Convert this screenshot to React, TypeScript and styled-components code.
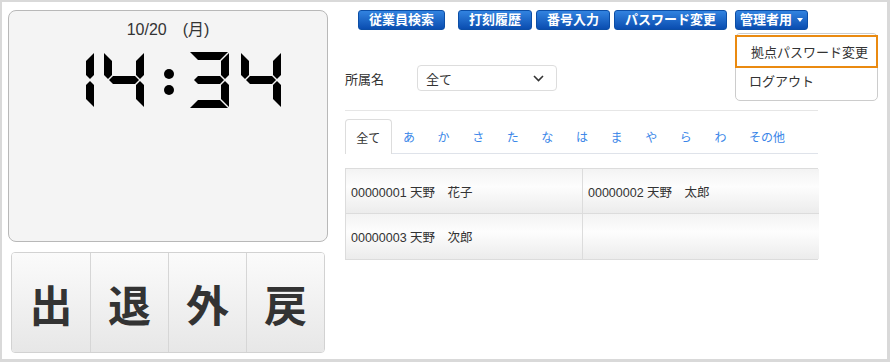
import styled, { createGlobalStyle } from "styled-components";

const GlobalStyle = createGlobalStyle`
  html, body {
    margin: 0;
    padding: 0;
    background: #ffffff;
  }
  body {
    font-family: "Liberation Sans", "Noto Sans CJK JP", sans-serif;
    color: #333333;
  }
`;

const Frame = styled.div`
  box-sizing: border-box;
  width: 890px;
  height: 362px;
  border-style: solid;
  border-color: #d9d9d9;
  border-width: 2px 3px 3px 2px;
  padding: 8px 0 0 6px;
  display: flex;
  gap: 17px;
  position: relative;
  overflow: hidden;
`;

const LeftColumn = styled.div`
  width: 320px;
  display: flex;
  flex-direction: column;
  gap: 10px;
`;

const ClockPanel = styled.div`
  box-sizing: border-box;
  height: 232px;
  border: 1px solid #b8b8b8;
  border-radius: 8px;
  background: #f4f4f4;
  padding-top: 9px;
  display: flex;
  flex-direction: column;
  align-items: center;
`;

const DateText = styled.div`
  font-size: 16px;
  line-height: 20px;
  color: #333;
`;

const DigitSvg = styled.svg`
  margin-top: 12px;
  display: block;
`;

const PunchGroup = styled.div`
  margin: 0 3px;
  display: grid;
  grid-template-columns: repeat(4, 1fr);
  border: 1px solid #d2d2d2;
  border-radius: 4px;
  overflow: hidden;
  height: 101px;
  box-sizing: border-box;
`;

const PunchButton = styled.button`
  border: none;
  border-left: 1px solid #d6d6d6;
  &:first-child {
    border-left: none;
  }
  background: linear-gradient(#fbfbfb, #e7e7e7);
  font-family: "Noto Sans CJK JP", sans-serif;
  font-weight: 700;
  font-size: 43px;
  color: #333;
  padding: 0;
  cursor: pointer;
`;

const RightColumn = styled.div`
  width: 473px;
  display: flex;
  flex-direction: column;
`;

const Nav = styled.div`
  display: flex;
  padding-left: 13px;
  height: 20px;
`;

const NavGroup = styled.div<{ $gapBefore?: number }>`
  display: flex;
  gap: 4px;
  position: relative;
  margin-left: ${(p) => p.$gapBefore ?? 0}px;
`;

const NavButton = styled.button<{ $menu?: boolean }>`
  box-sizing: border-box;
  height: 20px;
  padding: ${(p) => (p.$menu ? "0 4px" : "0 10px")};
  border: 1px solid #0c4ea6;
  border-radius: 3px;
  background: linear-gradient(#3283e0, #0a4db0);
  color: #ffffff;
  font-family: "Liberation Sans", "Noto Sans CJK JP", sans-serif;
  font-size: 13px;
  font-weight: 700;
  line-height: 18px;
  white-space: nowrap;
  display: flex;
  align-items: center;
  gap: 5px;
`;

const Caret = styled.span`
  width: 0;
  height: 0;
  border-left: 3px solid transparent;
  border-right: 3px solid transparent;
  border-top: 4px solid #ffffff;
`;

const Dropdown = styled.div`
  position: absolute;
  top: 23px;
  left: 0;
  width: 143px;
  box-sizing: border-box;
  background: #ffffff;
  border: 1px solid #cccccc;
  border-radius: 5px;
  padding: 1px 0 8px;
  z-index: 5;
`;

const MenuItem = styled.div<{ $highlight?: boolean }>`
  box-sizing: border-box;
  height: ${(p) => (p.$highlight ? "33px" : "24px")};
  margin: ${(p) => (p.$highlight ? "0 -1px" : "0")};
  padding-left: ${(p) => (p.$highlight ? "14px" : "13px")};
  border: ${(p) => (p.$highlight ? "2px solid #ea8a10" : "none")};
  display: flex;
  align-items: center;
  font-size: 13px;
  color: #333;
  white-space: nowrap;
`;

const FilterRow = styled.div`
  margin-top: 35px;
  display: flex;
  align-items: center;
  height: 26px;
`;

const Label = styled.div`
  width: 72px;
  font-size: 13px;
  color: #333;
`;

const SelectBox = styled.div`
  box-sizing: border-box;
  width: 140px;
  height: 26px;
  border: 1px solid #dddddd;
  border-radius: 4px;
  padding: 0 12px 0 8px;
  display: flex;
  align-items: center;
  justify-content: space-between;
  font-size: 13px;
  color: #333;
`;

const Divider = styled.div`
  margin-top: 19px;
  height: 1px;
  background: #e6e6e6;
`;

const TabBar = styled.div`
  margin-top: 8px;
  display: flex;
  height: 35px;
  box-sizing: border-box;
  border-bottom: 1px solid #dfe3ea;
`;

const Tab = styled.div<{ $active?: boolean }>`
  box-sizing: border-box;
  padding: 0 10.3px;
  height: ${(p) => (p.$active ? "35px" : "34px")};
  display: flex;
  align-items: center;
  font-size: 12px;
  color: ${(p) => (p.$active ? "#333" : "#3a86e8")};
  background: #ffffff;
  border: ${(p) => (p.$active ? "1px solid #dddddd" : "1px solid transparent")};
  border-bottom: none;
  border-radius: 4px 4px 0 0;
  white-space: nowrap;
`;

const Table = styled.div`
  margin-top: 14px;
  display: grid;
  grid-template-columns: 237px 236px;
  border: 1px solid #dcdcdc;
  box-sizing: border-box;
`;

const Cell = styled.div`
  box-sizing: border-box;
  height: 45px;
  padding-left: 5px;
  display: flex;
  align-items: center;
  font-size: 12.5px;
  color: #333;
  background: linear-gradient(#f3f3f3, #fdfdfd 40%, #ececec);
  border-right: 1px solid #dcdcdc;
  border-bottom: 1px solid #dcdcdc;
  &:nth-child(2n) {
    border-right: none;
  }
  &:nth-last-child(-n + 2) {
    border-bottom: none;
  }
`;

type Pt = [number, number];

const W = 40;
const H = 56;
const T = 8;
const G = 1;
const M = H / 2;

const SEGMENTS: Record<string, Pt[]> = {
  a: [[G, 0], [W - G, 0], [W - G - T, T], [G + T, T]],
  b: [[W, G], [W, M - G - T / 2], [W - T / 2, M - G], [W - T, M - G - T / 2], [W - T, T + G]],
  c: [[W - T / 2, M + G], [W, M + G + T / 2], [W, H - G], [W - T, H - T - G], [W - T, M + G + T / 2]],
  d: [[G + T, H - T], [W - G - T, H - T], [W - G, H], [G, H]],
  e: [[T / 2, M + G], [T, M + G + T / 2], [T, H - T - G], [0, H - G], [0, M + G + T / 2]],
  f: [[0, G], [T, T + G], [T, M - G - T / 2], [T / 2, M - G], [0, M - G - T / 2]],
  g: [[T / 2 + G, M], [T + G, M - T / 2], [W - T - G, M - T / 2], [W - T / 2 - G, M], [W - T - G, M + T / 2], [T + G, M + T / 2]],
};

const DIGITS: Record<string, string> = {
  "0": "abcdef",
  "1": "bc",
  "2": "abdeg",
  "3": "abcdg",
  "4": "bcfg",
  "5": "acdfg",
  "6": "acdefg",
  "7": "abc",
  "8": "abcdefg",
  "9": "abcdfg",
};

const Digit = ({ value, x }: { value: string; x: number }) => (
  <g transform={`translate(${x} 0)`}>
    {DIGITS[value].split("").map((s) => (
      <polygon key={s} points={SEGMENTS[s].map((p) => p.join(",")).join(" ")} fill="#000" />
    ))}
  </g>
);

const SegmentClock = ({ time }: { time: string }) => {
  const [hh, mm] = time.split(":");
  return (
    <DigitSvg width="230" height="57" viewBox="0 0 230 57">
      <Digit value={hh[0]} x={1} />
      <Digit value={hh[1]} x={51} />
      <circle cx="116" cy="22" r="5" fill="#000" />
      <circle cx="116" cy="38" r="5" fill="#000" />
      <Digit value={mm[0]} x={136} />
      <Digit value={mm[1]} x={188} />
    </DigitSvg>
  );
};

const Chevron = () => (
  <svg width="11" height="7" viewBox="0 0 11 7">
    <path d="M1 1l4.5 4.5L10 1" fill="none" stroke="#333" strokeWidth="1.6" />
  </svg>
);

const tabs = ["あ", "か", "さ", "た", "な", "は", "ま", "や", "ら", "わ", "その他"];

const staff = ["00000001 天野　花子", "00000002 天野　太郎", "00000003 天野　次郎", ""];

const App = () => {
  return (
    <>
      <GlobalStyle />
      <Frame>
        <LeftColumn>
          <ClockPanel>
            <DateText>10/20　(月)</DateText>
            <SegmentClock time="14:34" />
          </ClockPanel>
          <PunchGroup>
            <PunchButton>出</PunchButton>
            <PunchButton>退</PunchButton>
            <PunchButton>外</PunchButton>
            <PunchButton>戻</PunchButton>
          </PunchGroup>
        </LeftColumn>

        <RightColumn>
          <Nav>
            <NavGroup>
              <NavButton>従業員検索</NavButton>
            </NavGroup>
            <NavGroup $gapBefore={13}>
              <NavButton>打刻履歴</NavButton>
              <NavButton>番号入力</NavButton>
              <NavButton>パスワード変更</NavButton>
            </NavGroup>
            <NavGroup $gapBefore={8}>
              <NavButton $menu>
                管理者用
                <Caret />
              </NavButton>
              <Dropdown>
                <MenuItem $highlight>拠点パスワード変更</MenuItem>
                <MenuItem>ログアウト</MenuItem>
              </Dropdown>
            </NavGroup>
          </Nav>

          <FilterRow>
            <Label>所属名</Label>
            <SelectBox>
              全て
              <Chevron />
            </SelectBox>
          </FilterRow>

          <Divider />

          <TabBar>
            <Tab $active>全て</Tab>
            {tabs.map((t) => (
              <Tab key={t}>{t}</Tab>
            ))}
          </TabBar>

          <Table>
            {staff.map((s, i) => (
              <Cell key={i}>{s}</Cell>
            ))}
          </Table>
        </RightColumn>
      </Frame>
    </>
  );
};

export default App;
